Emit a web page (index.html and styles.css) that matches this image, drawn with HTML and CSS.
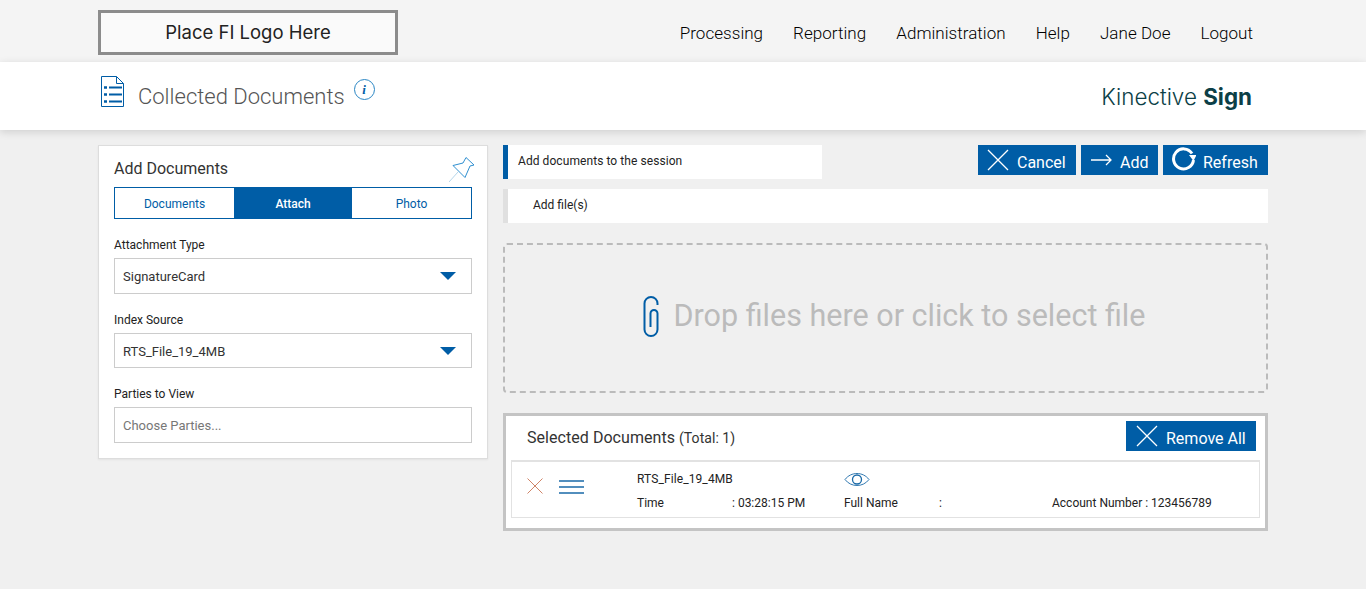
FILE: index.html
```html
<!DOCTYPE html>
<html lang="en">
<head>
<meta charset="utf-8">
<title>Collected Documents</title>
<link rel="stylesheet" href="styles.css">
</head>
<body>
<header class="topbar">
  <div class="wrap topbar-in">
    <div class="logo">Place FI Logo Here</div>
    <nav class="nav">
      <a>Processing</a><a>Reporting</a><a>Administration</a><a>Help</a><a>Jane Doe</a><a>Logout</a>
    </nav>
  </div>
</header>
<section class="titlebar">
  <div class="wrap titlebar-in">
    <svg class="doc-icon" width="24" height="31" viewBox="0 0 24 31" fill="none" stroke="#005da6">
      <path d="M1.500 .5H16.500L23.500 7.500V30.500H1.500Z" stroke-width="1"/>
      <path d="M16.500 .5V7.500H23.500" stroke-width="1"/>
      <path d="M9 11.500H22M9 18.500H22M9 25.500H22" stroke-width="2"/>
      <path d="M4 11.500H7M4 18.500H7M4 25.500H7" stroke-width="2.600"/>
    </svg>
    <h1 class="page-title">Collected Documents</h1>
    <span class="info"><i>i</i></span>
    <div class="brand">Kinective <b>Sign</b></div>
  </div>
</section>
<main class="wrap main">
  <aside class="panel">
    <div class="panel-head">
      <h2>Add Documents</h2>
      <svg class="pin" width="26" height="26" viewBox="0 0 26 26" fill="none" stroke="#2f8fd0" stroke-width="1">
        <path d="M17 .5L25 8L21 9L16 20.500L4 8.500L14 6Z"/>
        <path d="M9 15L0 25" stroke="#b5d6ea"/>
      </svg>
    </div>
    <div class="tabs">
      <div class="tab tab-docs">Documents</div>
      <div class="tab tab-attach">Attach</div>
      <div class="tab tab-photo">Photo</div>
    </div>
    <label class="lbl">Attachment Type</label>
    <div class="field">SignatureCard<span class="caret"></span></div>
    <label class="lbl">Index Source</label>
    <div class="field field-short">RTS_File_19_4MB<span class="caret"></span></div>
    <label class="lbl">Parties to View</label>
    <div class="field placeholder">Choose Parties...</div>
  </aside>
  <div class="content">
    <div class="actions-row">
      <div class="bar bar-active">Add documents to the session</div>
      <div class="actions">
        <button class="btn btn-cancel"><svg width="24" height="24" viewBox="0 0 24 24" stroke="#fff" stroke-width="1.300" fill="none"><path d="M2 2L22 22M22 2L2 22"/></svg><span>Cancel</span></button>
        <button class="btn btn-add"><svg width="21" height="12" viewBox="0 0 21 12" stroke="#fff" stroke-width="1.300" fill="none"><path d="M0 6H20M15 1L20 6L15 11"/></svg><span>Add</span></button>
        <button class="btn btn-refresh"><svg class="refresh-icon" width="24" height="24" viewBox="0 0 24 24" fill="none"><path d="M20 6.500A10 10 0 1 0 21.500 13" stroke="#fff" stroke-width="3"/><path d="M17 8H24.500L21.500 14Z" fill="#fff"/></svg><span>Refresh</span></button>
      </div>
    </div>
    <div class="bar bar-files">Add file(s)</div>
    <div class="dropzone">
      <svg class="clip" width="16" height="41" viewBox="0 0 16 41" fill="none" stroke="#005da6" stroke-width="2">
        <path d="M14.500 9V7.500A6.500 6.500 0 0 0 1.500 7.500V33.500A6.500 6.500 0 0 0 14.500 33.500V17.500A3.500 3.500 0 0 0 7.500 17.500V31"/>
      </svg>
      <span>Drop files here or click to select file</span>
    </div>
    <section class="selected">
      <div class="selected-head">
        <h2>Selected Documents <small>(Total: 1)</small></h2>
        <button class="btn btn-remove"><svg width="24" height="24" viewBox="0 0 24 24" stroke="#fff" stroke-width="1.300" fill="none"><path d="M2 2L22 22M22 2L2 22"/></svg><span>Remove All</span></button>
      </div>
      <div class="doc-row">
        <svg class="row-x" width="16" height="16" viewBox="0 0 16 16" stroke="#cf8468" stroke-width="1" fill="none"><path d="M.5 .5L15.500 15.500M15.500 .5L.5 15.500"/></svg>
        <svg class="row-menu" width="25" height="14" viewBox="0 0 25 14" stroke="#1a6aa8" stroke-width="1.400" fill="none"><path d="M0 1H25M0 7H25M0 13H25"/></svg>
        <div class="cols">
          <div class="cell cell-name">RTS_File_19_4MB</div>
          <div class="cell"><svg width="26" height="15" viewBox="0 0 26 15" fill="none" stroke="#1a6aa8" stroke-width=".9"><path d="M1 7.500C7 -.5 19 -.5 25 7.500C19 15.500 7 15.500 1 7.500Z"/><circle cx="13" cy="7.500" r="4.500" stroke-width="1.300"/></svg></div>
          <div class="cell"></div>
          <div class="cell kv"><span class="k">Time</span><span>: 03:28:15 PM</span></div>
          <div class="cell kv"><span class="k">Full Name</span><span>:</span></div>
          <div class="cell">Account Number : 123456789</div>
        </div>
      </div>
    </section>
  </div>
</main>
</body>
</html>
```

FILE: styles.css
```css
* { box-sizing: border-box; }
html, body { margin: 0; height: 100%; }
body { background: #f0f0f0; font-family: Roboto, "Liberation Sans", sans-serif; color: #222; overflow: hidden; }
h1, h2 { margin: 0; font-weight: 400; }
.wrap { width: 1170px; margin: 0 auto; }

.topbar { height: 62px; background: #f4f4f4; padding-top: 10px; }
.topbar-in { display: flex; justify-content: space-between; align-items: flex-start; }
.logo { width: 300px; height: 45px; border: 3px solid #8c8c8c; background: #fafafa; display: flex; align-items: center; justify-content: center; font: 400 18.500px/1 Inter, sans-serif; color: #222; }
.nav { display: flex; gap: 30px; padding: 13px 15px 0 0; font-size: 17px; font-weight: 300; line-height: 20px; color: #000; letter-spacing: .04px; }

.titlebar { height: 68px; background: #fff; box-shadow: 0 2px 8px rgba(0,0,0,.14); position: relative; }
.titlebar-in { display: flex; align-items: flex-start; height: 100%; }
.doc-icon { margin: 14px 0 0 2px; }
.page-title { font-size: 22px; font-weight: 300; color: #555; line-height: 28px; margin: 21px 0 0 14px; }
.info { width: 21px; height: 21px; border: 1px solid #2a86c4; border-radius: 50%; margin: 17px 0 0 9px; display: flex; align-items: center; justify-content: center; font: 700 13px/1 "Liberation Serif", serif; color: #005da6; }
.brand { margin: 20px 16px 0 auto; font: 300 22.400px/30px Inter, sans-serif; color: #0c3f47; }
.brand b { font-weight: 700; }

.main { display: flex; gap: 15px; align-items: flex-start; padding-top: 15px; }
.panel { width: 390px; height: 314px; background: #fff; border: 1px solid #ddd; box-shadow: 0 1px 2px rgba(0,0,0,.06); padding: 0 15px; }
.panel-head { display: flex; justify-content: space-between; height: 41px; }
.panel-head h2 { font-size: 16px; line-height: 20px; margin-top: 13px; color: #333; }
.pin { margin-top: 11px; margin-right: -3px; }
.tabs { display: flex; height: 32px; border: 1px solid #005da6; font-size: 12px; }
.tab { display: flex; align-items: center; justify-content: center; color: #005da6; padding-top: 1px; }
.tab-docs { width: 119px; }
.tab-attach { width: 118px; background: #005da6; color: #fff; font-weight: 500; }
.tab-photo { flex: 1; }
.lbl { display: block; font-size: 12px; line-height: 14px; color: #222; margin-top: 19px; }
.field { height: 36px; margin-top: 6px; border: 1px solid #ccc; padding: 0 8px; display: flex; align-items: center; justify-content: space-between; font-size: 13px; color: #333; }
.field-short { height: 35px; padding-top: 1px; }
.placeholder { color: #777; }
.caret { width: 0; height: 0; border-left: 8px solid transparent; border-right: 8px solid transparent; border-top: 8px solid #005da6; margin-right: 7px; }

.content { width: 765px; }
.actions-row { display: flex; justify-content: space-between; align-items: flex-start; }
.bar { height: 34px; background: #fff; display: flex; align-items: center; font-size: 12px; color: #222; padding-bottom: 2px; }
.bar-active { width: 319px; border-left: 5px solid #005da6; padding-left: 10px; letter-spacing: .07px; }
.bar-files { margin-top: 10px; border-left: 5px solid #e0e0e0; padding-left: 25px; }
.actions { display: flex; gap: 5px; }
.btn { height: 30px; border: 0; background: #005da6; color: #fff; display: flex; align-items: center; font: 400 16px/1 Roboto, sans-serif; padding: 0; }
.btn span { padding-top: 5px; }
.btn-cancel { width: 98px; padding-left: 8px; gap: 7px; }
.btn-add { width: 77px; padding-left: 10px; gap: 8px; }
.btn-refresh { width: 105px; padding-left: 9px; gap: 7px; }
.refresh-icon { margin-top: -2px; }
.dropzone { height: 150px; margin-top: 20px; border: 2px dashed #bbb; border-radius: 4px; display: flex; align-items: center; justify-content: center; gap: 15px; font-size: 30.500px; color: #bbb; padding: 0 0 6px 17px; }
.clip { margin-top: 2px; }
.selected { height: 118px; margin-top: 20px; background: #fff; border: 3px solid #c4c4c4; padding: 5px 5px 0; }
.selected-head { display: flex; justify-content: space-between; height: 39px; padding-right: 4px; }
.selected-head h2 { font-size: 16px; line-height: 20px; padding: 7px 0 0 16px; color: #333; letter-spacing: .05px; }
.selected-head small { font-size: 14px; }
.btn-remove { width: 130px; padding-left: 9px; gap: 7px; }
.doc-row { height: 58px; border: 1px solid #e2e2e2; border-top-width: 2px; display: flex; align-items: flex-start; }
.row-x { margin: 16px 0 0 15px; }
.row-menu { margin: 18px 0 0 16px; }
.cols { display: grid; grid-template-columns: 207px 208px 1fr; grid-template-rows: 24px 25px; margin-left: 53px; padding-top: 5px; flex: 1; font-size: 12px; line-height: 25px; color: #222; }
.cell-name { letter-spacing: .1px; }
.cell svg { display: block; margin-top: 5px; }
.kv { display: flex; }
.k { width: 95px; }
```
